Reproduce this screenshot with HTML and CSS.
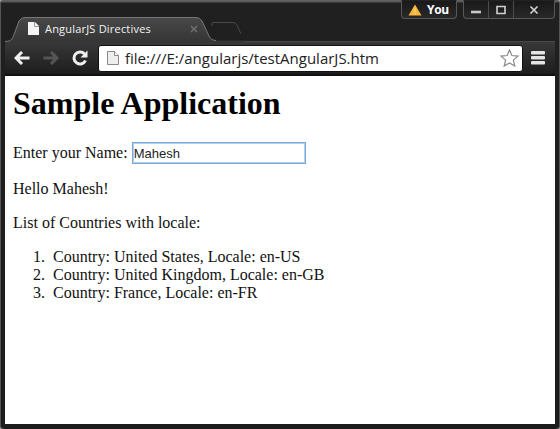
FILE: index.html
```html
<!DOCTYPE html>
<html lang="en">
<head>
<meta charset="utf-8">
<title>AngularJS Directives</title>
<link rel="stylesheet" href="styles.css">
</head>
<body>
<div class="window">
  <header class="titlebar">
    <div class="tabs">
      <svg class="tab-shape" width="240" height="26" viewBox="0 0 240 26">
        <defs><linearGradient id="tab" x2="0" y2="1"><stop offset="0" stop-color="#484848"/><stop offset="1" stop-color="#353535"/></linearGradient></defs>
        <path d="M0 25.500C8 25 7 23 10 16L14 5Q16 1.500 20 1.500H191Q195 1.500 197 5L204 20Q206 24.500 211 24.500H240V26H0Z" fill="url(#tab)"/>
        <path d="M0 25.500C8 25 7 23 10 16L14 5Q16 1.500 20 1.500H191Q195 1.500 197 5L204 20Q206 24.500 211 24.500" fill="none" stroke="#777"/>
        <path d="M208 6.500H228Q231 6.500 232 9L236 18Q237 19.500 234 19.500H215Q212 19.500 211 17L207 8Q206.500 6.500 208 6.500Z" fill="#202020"/>
        <path d="M207 10Q206 6.500 208 6.500H228Q231 6.500 232 9L236 18" fill="none" stroke="#484848"/>
      </svg>
      <svg class="tab-file" width="11" height="13" viewBox="0 0 11 13"><path d="M0 0H7L11 4V13H0Z" fill="#f4f4f4"/><path d="M6.500 0V4.500H11" fill="none" stroke="#999"/></svg>
      <span class="tab-title">AngularJS Directives</span>
      <svg class="tab-close" width="8" height="8" viewBox="0 0 8 8"><path d="M1 1L7 7M7 1L1 7" stroke="#707070" stroke-width="1.500"/></svg>
    </div>
    <div class="user">
      <svg width="14" height="12" viewBox="0 0 14 12"><path d="M7 .5L13.500 11.500H.5Z" fill="#f6b73c"/><path d="M7 4V8M7 9V10.500" stroke="#ffd572" stroke-width="1.300"/></svg>
      <span>You</span>
    </div>
    <div class="controls">
      <span class="control"><svg width="10" height="10" viewBox="0 0 10 10"><path d="M0 7H10" stroke="#c8c8c8" stroke-width="2.600"/></svg></span>
      <span class="control"><svg width="10" height="10" viewBox="0 0 10 10"><path d="M1 1.500H9V8.500H1Z" fill="none" stroke="#d0d0d0" stroke-width="1.600"/></svg></span>
      <span class="control close"><svg width="10" height="10" viewBox="0 0 10 10"><path d="M1.500 1.500L8.500 8.500M8.500 1.500L1.500 8.500" stroke="#d0d0d0" stroke-width="1.700"/></svg></span>
    </div>
  </header>
  <nav class="toolbar">
    <svg width="16" height="14" viewBox="0 0 16 14"><path d="M15.500 7H2M8 1L2 7L8 13" fill="none" stroke="#f0f0f0" stroke-width="3"/></svg>
    <svg class="forward" width="16" height="14" viewBox="0 0 16 14"><path d="M.5 7H14M8 1L14 7L8 13" fill="none" stroke="#555" stroke-width="3"/></svg>
    <svg class="reload" width="16" height="16" viewBox="0 0 16 16"><path d="M12.500 4A6 6 0 1 0 13.500 10.500" fill="none" stroke="#f0f0f0" stroke-width="3"/><path d="M15.500 .5V7.500H8.500Z" fill="#f0f0f0"/></svg>
    <div class="address">
      <svg width="12" height="14" viewBox="0 0 12 14"><path d="M.5 .5H7.500L11.500 4.500V13.500H.5Z" fill="#eee" stroke="#888"/><path d="M7.500 .5V4.500H11.500" fill="#fff" stroke="#888"/></svg>
      <span class="url">file:///E:/angularjs/testAngularJS.htm</span>
      <svg class="star" width="19" height="18" viewBox="0 0 19 18"><path d="M9.500 1L11.900 6.500L18 7.100L13.400 11.100L14.800 17L9.500 13.900L4.200 17L5.600 11.100L1 7.100L7.100 6.500Z" fill="#fff" stroke="#8a8a8a" stroke-width="1.200"/></svg>
    </div>
    <svg class="menu" width="14" height="14" viewBox="0 0 14 14"><g fill="#e4e4e4"><rect width="14" height="3.600" rx="1"/><rect y="5" width="14" height="3.600" rx="1"/><rect y="10" width="14" height="3.600" rx="1"/></g></svg>
  </nav>
  <main class="page">
    <h1>Sample Application</h1>
    <p class="field"><label for="name">Enter your Name:</label> <input id="name" type="text" value="Mahesh"></p>
    <p>Hello Mahesh!</p>
    <p>List of Countries with locale:</p>
    <ol>
      <li>Country: United States, Locale: en-US</li>
      <li>Country: United Kingdom, Locale: en-GB</li>
      <li>Country: France, Locale: en-FR</li>
    </ol>
  </main>
</div>
</body>
</html>
```
FILE: styles.css
```css
* { box-sizing: border-box; }
html { background: #aaa; }
body { margin: 0; overflow: hidden; }
svg { display: block; flex: none; }

.window {
  width: 560px;
  height: 429px;
  padding: 0 5px 5px;
  display: flex;
  flex-direction: column;
  background: linear-gradient(#666 0, #555 2px, #202020 3px, #1c1c1c 100%);
  border-radius: 4px;
  box-shadow: inset 1px 0 #555, inset -1px 0 #555;
}

.titlebar { height: 41px; display: flex; align-items: flex-start; }
.tabs {
  position: relative;
  width: 396px;
  height: 25px;
  margin-top: 16px;
  padding-left: 23px;
  display: flex;
  align-items: center;
}
.tab-shape { position: absolute; left: 0; top: 0; }
.tab-file, .tab-title, .tab-close { position: relative; }
.tab-title {
  width: 145px;
  margin-left: 6px;
  color: #f4f4f4;
  font: 11px "Open Sans", sans-serif;
  letter-spacing: 0.2px;
  white-space: nowrap;
}

.user, .controls {
  height: 19px;
  border: 1px solid #575757;
  border-top-color: #222;
  border-radius: 0 0 4px 4px;
  background: linear-gradient(#191919, #292929);
}
.user {
  width: 56px;
  display: flex;
  align-items: center;
  gap: 5px;
  padding-left: 6px;
  color: #fff;
  font: bold 12px "Open Sans", sans-serif;
  letter-spacing: -0.3px;
}
.controls { width: 92px; margin-left: 6px; display: flex; }
.control {
  width: 25px;
  display: flex;
  align-items: center;
  justify-content: center;
  border-right: 1px solid #4c4c4c;
}
.control.close { flex: 1; border: 0; }

.toolbar {
  height: 35px;
  padding: 0 9px;
  display: flex;
  align-items: center;
  border-top: 1px solid #484848;
  border-bottom: 2px solid #111;
  background: linear-gradient(#383838, #1d1d1d);
}
.forward { margin-left: 13px; }
.reload { margin-left: 13px; }
.address {
  width: 425px;
  height: 27px;
  margin-left: 10px;
  padding: 0 3px 0 8px;
  display: flex;
  align-items: center;
  background: #fff;
  border: 1px solid #111;
  border-radius: 3px;
}
.url {
  flex: 1;
  margin-left: 6px;
  color: #222;
  font: 15px "Open Sans", sans-serif;
  white-space: nowrap;
}
.menu { margin-left: 8px; }

.page {
  flex: 1;
  padding: 9px 8px;
  background: #fff;
  color: #111;
  font: 16px/18px "Liberation Serif", serif;
}
h1 { margin: 0 0 20px; color: #000; font-size: 32px; line-height: 37px; }
p { margin: 0 0 16px; }
.field { height: 22px; display: flex; align-items: center; gap: 4px; }
input {
  width: 174px;
  height: 22px;
  padding: 1px;
  border: 1px solid #79a7d8;
  outline: 1px solid #b5d0ef;
  outline-offset: -2px;
  color: #222;
  font: 13px "Liberation Sans", sans-serif;
}
ol { margin: 0; padding-left: 36px; }
li { padding-left: 4px; }
```
